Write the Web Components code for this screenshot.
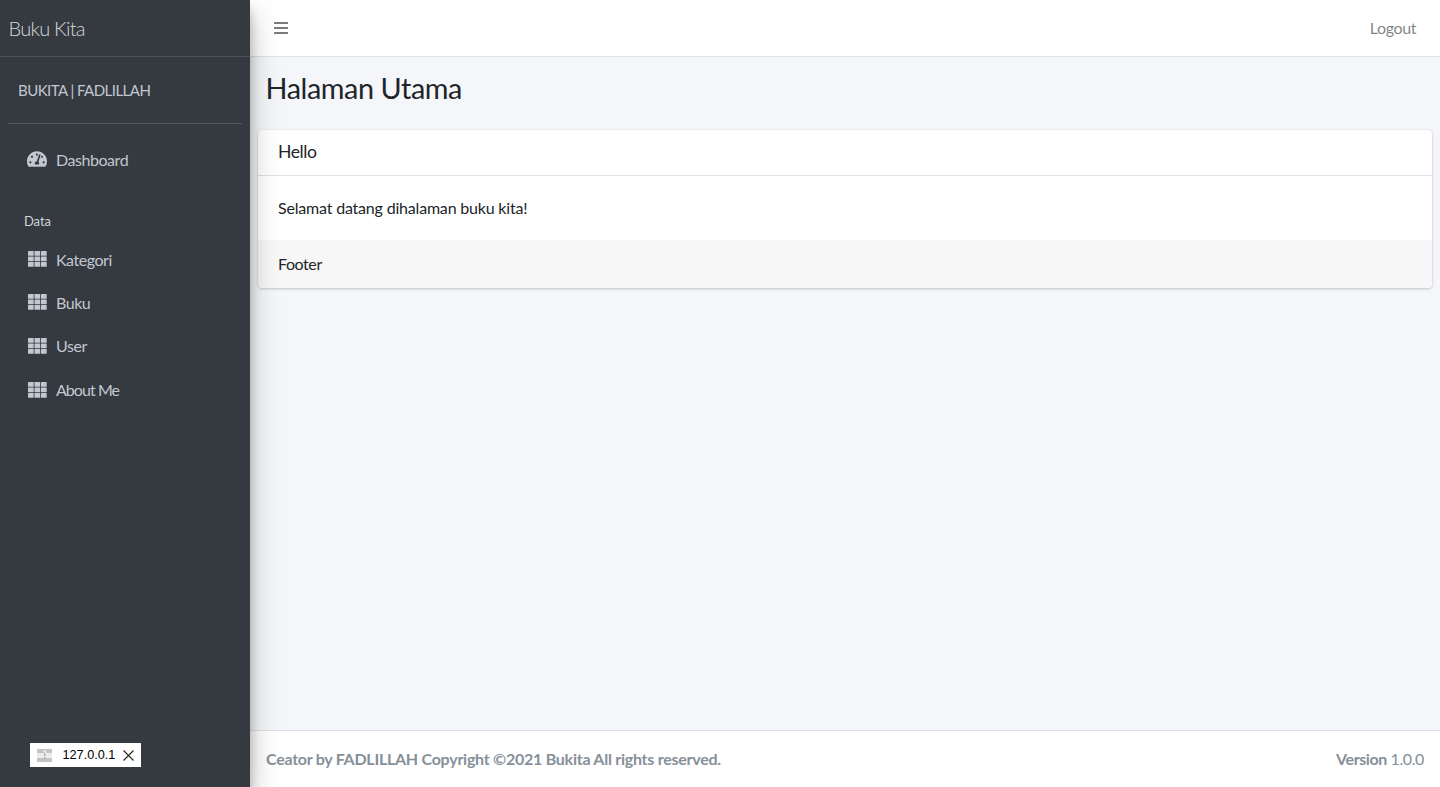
<!DOCTYPE html>
<html lang="id">
<head>
<meta charset="utf-8">
<title>Buku Kita</title>
<style>
html,body{margin:0;padding:0;height:100%;}
body{font-family:"Lato","Open Sans",sans-serif;font-size:16px;line-height:24px;color:#212529;background:#f4f6f9;overflow:hidden;}
</style>
</head>
<body>
<app-shell>
  <side-bar slot="side" brand="Buku Kita" user="BUKITA | FADLILLAH">
    <nav-item icon="gauge">Dashboard</nav-item>
    <nav-head>Data</nav-head>
    <nav-item icon="grid">Kategori</nav-item>
    <nav-item icon="grid">Buku</nav-item>
    <nav-item icon="grid">User</nav-item>
    <nav-item icon="grid" style="letter-spacing:-.95px;margin-top:.8px">About Me</nav-item>
    <host-tag slot="overlay">127.0.0.1</host-tag>
  </side-bar>
  <top-bar slot="top"></top-bar>
  <page-head slot="main">Halaman Utama</page-head>
  <content-card slot="main">
    <span slot="title">Hello</span>
    Selamat datang dihalaman buku kita!
    <span slot="foot">Footer</span>
  </content-card>
  <page-foot slot="foot"></page-foot>
</app-shell>

<script>
function def(name, css, html){
  customElements.define(name, class extends HTMLElement{
    constructor(){super();const r=this.attachShadow({mode:'open'});
      r.innerHTML='<style>'+css+'</style>'+(typeof html==='function'?html(this):html);}
  });
}
def('app-shell',
 `:host{display:grid;grid-template-columns:250px 1fr;height:100vh;width:100vw;}
  .side{grid-column:1;position:relative;z-index:2;display:flex;}
  .col{grid-column:2;display:flex;flex-direction:column;min-width:0;height:100vh;}
  .main{flex:1;min-height:0;}`,
 `<div class="side"><slot name="side"></slot></div>
  <div class="col"><slot name="top"></slot><div class="main"><slot name="main"></slot></div><slot name="foot"></slot></div>`);

def('side-bar',
 `:host{display:flex;flex-direction:column;width:250px;background:#343a40;position:relative;
    box-shadow:0 14px 28px rgba(0,0,0,.25),0 10px 10px rgba(0,0,0,.22);}
  .brand{height:56px;box-sizing:border-box;padding:16px 0 0 8.5px;font-size:20px;font-weight:300;line-height:24px;color:rgba(255,255,255,.8);letter-spacing:-.75px;}
  .rule{height:1px;background:#4b545c;}
  .user{margin:0 8px;height:67px;box-sizing:border-box;padding:21px 0 0 10px;border-bottom:1px solid #4f5962;color:#c2c7d0;font-size:15px;line-height:24px;letter-spacing:-.53px;}
  nav{padding:14px 8px 0;display:flex;flex-direction:column;}`,
 el=>`<div class="brand">${el.getAttribute('brand')}</div><div class="rule"></div>
  <div class="user">${el.getAttribute('user')}</div>
  <nav><slot></slot></nav><slot name="overlay"></slot>`);

const ICONS={
 gauge:`<svg width="20" height="18" viewBox="0 0 576 512" fill="currentColor"><path d="M288 32C128.94 32 0 160.94 0 320c0 52.8 14.25 102.26 39.06 144.8 5.61 9.62 16.3 15.2 27.44 15.2h443c11.14 0 21.83-5.58 27.44-15.2C561.75 422.26 576 372.8 576 320c0-159.06-128.94-288-288-288zm0 64c14.71 0 26.58 10.13 30.32 23.65-1.11 2.26-2.64 4.23-3.45 6.67l-9.22 27.67c-5.13 3.49-10.97 6.01-17.64 6.01-17.67 0-32-14.33-32-32S270.33 96 288 96zM96 384c-17.67 0-32-14.33-32-32s14.33-32 32-32 32 14.33 32 32-14.33 32-32 32zm48-160c-17.67 0-32-14.33-32-32s14.33-32 32-32 32 14.33 32 32-14.33 32-32 32zm246.77-72.41l-61.33 184C343.13 347.33 352 364.54 352 384c0 11.72-3.38 22.55-8.88 32H232.88c-5.5-9.45-8.88-20.28-8.88-32 0-33.94 26.5-61.43 59.9-63.59l61.34-184.01c4.17-12.56 17.73-19.45 30.36-15.17 12.57 4.19 19.35 17.79 15.17 30.36zm14.66 57.2l15.52-46.55c3.47-1.29 7.13-2.23 11.05-2.23 17.67 0 32 14.33 32 32s-14.33 32-32 32c-11.38-.01-20.89-6.28-26.57-15.22zM480 384c-17.67 0-32-14.33-32-32s14.33-32 32-32 32 14.33 32 32-14.33 32-32 32z"/></svg>`,
 grid:`<svg width="19" height="16" viewBox="0 0 19 16" fill="currentColor">${[0,5.5,11].map(y=>[0,6.5,13].map(x=>`<rect x="${x}" y="${y}" width="5.7" height="4.8" rx=".4"/>`).join('')).join('')}</svg>`
};
def('nav-item',
 `:host{display:flex;align-items:center;height:43.2px;padding-left:19px;color:#c2c7d0;font-size:16px;letter-spacing:-.45px;}
  .i{width:20px;height:19px;display:flex;justify-content:center;align-items:center;margin-right:9px;margin-top:-1px;}
  svg{display:block;}`,
 el=>`<span class="i">${ICONS[el.getAttribute('icon')]}</span><slot></slot>`);

def('nav-head',
 `:host{display:block;padding:30px 0 0 16px;height:57px;box-sizing:border-box;font-size:13px;line-height:20px;color:#d0d4db;letter-spacing:-.1px;}`,
 `<slot></slot>`);

def('host-tag',
 `:host{position:absolute;left:30px;top:743px;width:111px;height:24px;background:#fff;display:flex;align-items:center;box-sizing:border-box;padding-left:7px;font-family:"Liberation Sans",sans-serif;font-size:12.7px;color:#000;}
  .fav{width:15px;height:13px;margin-right:10.5px;flex:none;display:block;}
  .x{margin-left:8px;flex:none;display:block;}`,
 `<svg class="fav" viewBox="0 0 15 13"><rect width="15" height="13" fill="#c4c4c4"/><rect y="4" width="15" height="5" fill="#ececec"/><rect x="6" y="1.5" width="3" height="1.2" fill="#f2f2f2"/><rect x="8" y="2.5" width="1.4" height="2" fill="#f2f2f2"/><rect x="7" y="4.5" width="1.4" height="2.5" fill="#a8a8a8"/><rect x="7" y="8" width="1.4" height="1.4" fill="#a8a8a8"/></svg><slot></slot>
  <svg class="x" width="11" height="11" viewBox="0 0 11 11" stroke="#222" stroke-width="1.1" fill="none"><path d="M.5 .5l10 10M10.5 .5l-10 10"/></svg>`);

def('top-bar',
 `:host{display:flex;justify-content:space-between;align-items:center;height:57px;box-sizing:border-box;background:#fff;border-bottom:1px solid #dee2e6;padding:0 24px;color:rgba(0,0,0,.5);font-size:16px;}
  svg{display:block;}
  .l{letter-spacing:-.4px;}`,
 `<svg width="14" height="12" viewBox="0 0 14 12" fill="#7a7a7a"><rect width="14" height="2" rx=".5"/><rect y="5" width="14" height="2" rx=".5"/><rect y="10" width="14" height="2" rx=".5"/></svg><span class="l">Logout</span>`);

def('page-head',
 `:host{display:block;padding:14px 15.5px 0;height:73px;box-sizing:border-box;font-size:28.8px;line-height:34px;color:#212529;letter-spacing:-.42px;}`,
 `<slot></slot>`);

def('content-card',
 `:host{display:block;margin:0 8px;background:#fff;border-radius:4px;box-shadow:0 0 1px rgba(0,0,0,.125),0 1px 3px rgba(0,0,0,.2);overflow:hidden;font-size:16px;letter-spacing:-.42px;}
  .h{height:46px;box-sizing:border-box;border-bottom:1px solid rgba(0,0,0,.125);padding:9px 20px;font-size:17.6px;line-height:25px;}
  .b{height:64px;box-sizing:border-box;padding:20px 20px;letter-spacing:-.19px;}
  .f{height:48px;box-sizing:border-box;padding:12px 20px;background:#f7f7f7;line-height:24px;}`,
 `<div class="h"><slot name="title"></slot></div><div class="b"><slot></slot></div><div class="f"><slot name="foot"></slot></div>`);

def('page-foot',
 `:host{display:flex;justify-content:space-between;align-items:center;height:57px;box-sizing:border-box;background:#fff;border-top:1px solid #dee2e6;padding:0 16px;color:#869099;font-size:16px;letter-spacing:-.4px;}
  b{font-weight:700;}
  .c{letter-spacing:-.26px;}`,
 `<span class="c"><b>Ceator by FADLILLAH Copyright ©2021 Bukita All rights reserved.</b></span><span><b>Version</b> 1.0.0</span>`);
</script>
</body>
</html>
